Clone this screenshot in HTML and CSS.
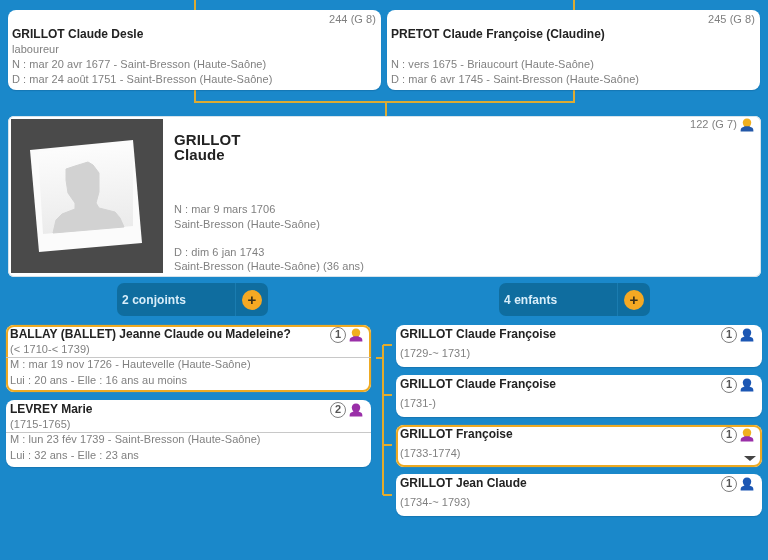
FILE: index.html
```html
<!DOCTYPE html>
<html lang="fr">
<head>
<meta charset="utf-8">
<title>GRILLOT Claude</title>
<link rel="stylesheet" href="styles.css">
</head>
<body>
<svg class="defs" width="0" height="0" aria-hidden="true">
  <symbol id="person" viewBox="0 0 14 14">
    <path class="head" d="M7 .4c2.800 0 4.200 1.700 4.200 4.100 0 2.100-1.100 3.700-2.200 4.600H5c-1.100-.9-2.200-2.500-2.200-4.600C2.800 2.100 4.200.4 7 .4z"/>
    <path class="body" d="M4.600 8.200h4.800c.6.600 1.500.9 2.500 1.200 1 .4 1.500 1.300 1.500 4H.6c0-2.700.5-3.600 1.500-4 1-.3 1.900-.6 2.500-1.200z"/>
  </symbol>
</svg>
<div class="stubs"></div>
<div class="parents">
  <section class="card parent">
    <div class="ref">244 (G 8)</div>
    <div class="name">GRILLOT Claude Desle</div>
    <div class="info">laboureur</div>
    <div class="info">N : mar 20 avr 1677 - Saint-Bresson (Haute-Saône)</div>
    <div class="info">D : mar 24 août 1751 - Saint-Bresson (Haute-Saône)</div>
  </section>
  <section class="card parent">
    <div class="ref">245 (G 8)</div>
    <div class="name">PRETOT Claude Françoise (Claudine)</div>
    <div class="info">&nbsp;</div>
    <div class="info">N : vers 1675 - Briaucourt (Haute-Saône)</div>
    <div class="info">D : mar 6 avr 1745 - Saint-Bresson (Haute-Saône)</div>
  </section>
</div>
<div class="bracket"></div>
<div class="stem"></div>
<main class="card main">
  <div class="photo">
    <svg width="152" height="154" viewBox="0 0 152 154">
      <defs>
        <linearGradient id="paper" x1="0" y1="0" x2="0.1" y2="1">
          <stop offset="0" stop-color="#fefefe"/>
          <stop offset="1" stop-color="#ebebeb"/>
        </linearGradient>
      </defs>
      <polygon points="19,31 122,21 131,124 28,133" fill="#fbfbfb"/>
      <polygon points="27,33 122,24 122,107 32,115" fill="url(#paper)"/>
      <path d="M55 50 64 47 77 43 82 46 88 54 88 73 85 84 88 89 104 93 109 99 113 108 42 114 45 101 51 95 64 90 64 84 57 74 55 61z" fill="#d2d2d2" stroke="#d2d2d2" stroke-linejoin="round"/>
    </svg>
  </div>
  <div class="main-body">
    <h1 class="main-name">GRILLOT<br>Claude</h1>
    <div class="main-info">N : mar 9 mars 1706<br>Saint-Bresson (Haute-Saône)</div>
    <div class="main-info">D : dim 6 jan 1743<br>Saint-Bresson (Haute-Saône) (36 ans)</div>
  </div>
  <div class="main-ref">122 (G 7) <svg class="icon gold-blue" width="14" height="14"><use href="#person"/></svg></div>
</main>
<div class="actions">
  <div class="pill first"><span class="pill-label">2 conjoints</span><span class="pill-add"><span class="plus">+</span></span></div>
  <div class="pill second"><span class="pill-label">4 enfants</span><span class="pill-add"><span class="plus">+</span></span></div>
</div>
<div class="family">
  <div class="spouses">
    <section class="card spouse selected">
      <div class="head-row"><div class="name">BALLAY (BALLET) Jeanne Claude ou Madeleine?</div><span class="count">1</span><svg class="icon gold-purple" width="14" height="14"><use href="#person"/></svg></div>
      <div class="info">(&lt; 1710-&lt; 1739)</div>
      <div class="rule"></div>
      <div class="info">M : mar 19 nov 1726 - Hautevelle (Haute-Saône)</div>
      <div class="info">Lui : 20 ans - Elle : 16 ans au moins</div>
    </section>
    <section class="card spouse">
      <div class="head-row"><div class="name">LEVREY Marie</div><span class="count">2</span><svg class="icon purple" width="14" height="14"><use href="#person"/></svg></div>
      <div class="info">(1715-1765)</div>
      <div class="rule"></div>
      <div class="info">M : lun 23 fév 1739 - Saint-Bresson (Haute-Saône)</div>
      <div class="info">Lui : 32 ans - Elle : 23 ans</div>
    </section>
  </div>
  <svg class="links" width="25" height="192" viewBox="0 0 25 192" aria-hidden="true">
    <path d="M12 20H21M12 20V170M5 33H12M12 70H21M12 120H21M12 170H21" fill="none" stroke="#e2ab2c" stroke-width="2"/>
  </svg>
  <div class="children">
    <section class="card child">
      <div class="head-row"><div class="name">GRILLOT Claude Françoise</div><span class="count">1</span><svg class="icon blue" width="14" height="14"><use href="#person"/></svg></div>
      <div class="info years">(1729-~ 1731)</div>
    </section>
    <section class="card child">
      <div class="head-row"><div class="name">GRILLOT Claude Françoise</div><span class="count">1</span><svg class="icon blue" width="14" height="14"><use href="#person"/></svg></div>
      <div class="info years">(1731-)</div>
    </section>
    <section class="card child selected">
      <div class="head-row"><div class="name">GRILLOT Françoise</div><span class="count">1</span><svg class="icon gold-purple" width="14" height="14"><use href="#person"/></svg></div>
      <div class="info years">(1733-1774)</div>
      <span class="caret"></span>
    </section>
    <section class="card child last">
      <div class="head-row"><div class="name">GRILLOT Jean Claude</div><span class="count">1</span><svg class="icon blue" width="14" height="14"><use href="#person"/></svg></div>
      <div class="info years">(1734-~ 1793)</div>
    </section>
  </div>
</div>
</body>
</html>
```
FILE: styles.css
```css
* { box-sizing: border-box; }
html, body { margin: 0; padding: 0; }
body {
  width: 768px;
  height: 560px;
  overflow: hidden;
  background: #1a88ca;
  font-family: "Liberation Sans", Arial, sans-serif;
  color: #808080;
  font-size: 11px;
  line-height: 15px;
  letter-spacing: .06px;
  filter: blur(.3px);
}
.defs { position: absolute; }
.card {
  background: #fff;
  border-radius: 8px;
  box-shadow: 0 1px 1px rgba(0,40,80,.18);
}
.name { font-weight: bold; font-size: 12px; color: #222; line-height: 15px; letter-spacing: 0; }
.info { white-space: nowrap; }

.stubs {
  width: 381px; height: 10px; margin-left: 194px;
  border-left: 2px solid #dcab34; border-right: 2px solid #dcab34;
}
.parents { display: flex; gap: 6px; margin-left: 8px; }
.parent { width: 373px; height: 80px; padding: 2px 5px 0 4px; }
.ref { text-align: right; line-height: 15px; }
.bracket {
  width: 381px; height: 13px; margin-left: 194px;
  border: 2px solid #dcab34; border-top: 0;
}
.stem { width: 2px; height: 13px; margin-left: 385px; background: #dcab34; }

.main {
  display: flex; width: 753px; height: 161px; margin-left: 8px;
  padding: 3px; border-radius: 6px; position: relative;
  box-shadow: inset 0 0 0 1px #d5e3ec;
}
.photo { width: 152px; height: 154px; background: #4a4a4a; flex: none; }
.photo svg { display: block; }
.main-body { padding: 13px 0 0 11px; }
.main-name { margin: 0 0 40px; font-size: 15px; line-height: 15px; color: #222; font-weight: bold; letter-spacing: .1px; }
.main-info { line-height: 14.500px; margin-bottom: 13.500px; }
.main-ref { position: absolute; top: 1px; right: 7px; display: flex; align-items: center; gap: 3px; height: 15px; }

.icon { display: block; flex: none; }
.head { fill: var(--head); }
.body { fill: var(--body); }
.actions { position: relative; height: 48px; }
.pill {
  position: absolute; top: 6px; width: 151px; height: 33px;
  display: flex; background: #0f6d9f; border-radius: 7px;
}
.pill.first { left: 117px; }
.pill.second { left: 499px; }
.pill-label { flex: 1; padding-left: 5px; line-height: 34px; font-weight: bold; font-size: 12px; color: #d8eefa; }
.pill-add { width: 33px; display: flex; align-items: center; justify-content: center; border-left: 1px solid #1a7cb0; }
.plus {
  width: 20px; height: 20px; border-radius: 50%; background: #f5a923; color: #3a2f18;
  font-weight: bold; font-size: 15px; line-height: 19px; text-align: center; letter-spacing: 0;
}

.family { display: flex; margin-left: 6px; }
.spouses { width: 365px; display: flex; flex-direction: column; gap: 8px; }
.links { flex: none; display: block; }
.children { width: 366px; display: flex; flex-direction: column; gap: 8px; }
.spouse { height: 67px; padding: 2px 4px; position: relative; }
.child { height: 42px; padding: 2px 4px; position: relative; }
.child.last { margin-top: -1px; }
.selected { box-shadow: 0 0 0 2px #eeaa22 inset, 0 0 1px #eeaa22; }
.head-row { display: flex; align-items: center; height: 15px; }
.head-row .name { flex: 1; }
.count {
  width: 16px; height: 16px; border-radius: 50%; border: 1.200px solid #808080; background: #fff;
  color: #555; font-size: 11px; font-weight: bold; line-height: 13px; text-align: center; margin-right: 3px; letter-spacing: 0;
}
.rule { height: 1px; background: #c8c8c8; margin: 0 -4px -1px; }
.rule + .info + .info { margin-top: 1px; }
.years { margin-top: 4px; }
.gold-blue { --head: #f0b020; --body: #2358a8; }
.gold-purple { --head: #f0b020; --body: #9a2fa8; }
.purple { --head: #9a2fa8; --body: #9a2fa8; }
.blue { --head: #1c57b4; --body: #1c57b4; }
.spouse .head-row .icon, .child .head-row .icon { margin-right: 4px; }
.caret {
  position: absolute; right: 6px; bottom: 6px; width: 0; height: 0;
  border-left: 6px solid transparent; border-right: 6px solid transparent; border-top: 5px solid #444;
}
```
